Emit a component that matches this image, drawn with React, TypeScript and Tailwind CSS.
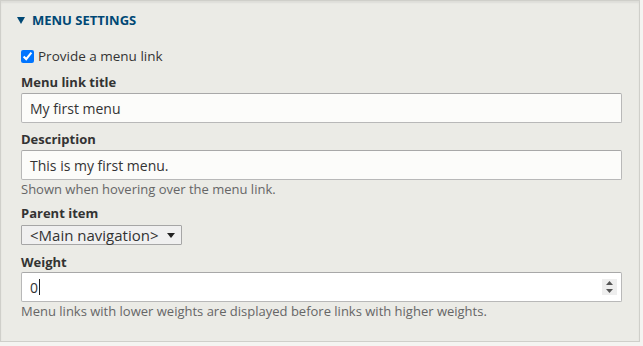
import React from "react";

const font = { fontFamily: '"Open Sans", "Noto Sans", sans-serif' };

export default function App() {
  return (
    <div className="w-[643px] h-[346px] bg-[#f4f4f1] text-[#333]" style={font}>
      <div className="h-[342px] border border-[#cfcfca] bg-[#ebebe6] shadow-[inset_0_2px_2px_rgba(0,0,0,0.06)] mr-[3px]">
        <div className="flex items-center gap-[7px] pl-[16px] pt-[11px] leading-[16px] text-[#004875] font-bold text-[13px] uppercase">
          <svg width="8" height="7" viewBox="0 0 8 7" className="mt-[1px]">
            <polygon points="0,0 8,0 4,7" fill="#004875" />
          </svg>
          <span>Menu settings</span>
        </div>
        <div className="pl-[20px] pr-[17px]">
          <label className="mt-[20px] flex items-center gap-[4px] text-[13.5px] h-[16px]">
            <input type="checkbox" defaultChecked className="w-[13px] h-[13px] m-0" />
            <span>Provide a menu link</span>
          </label>
          <div className="mt-[10px] text-[13px] font-bold leading-[16px]">Menu link title</div>
          <div className="mt-[3px] h-[30px] border border-[#b8b8b8] border-t-[#a8a8a8] bg-[#fcfcfa] rounded-[2px] flex items-center px-[8px] text-[14px]">
            My first menu
          </div>
          <div className="mt-[8px] text-[13px] font-bold leading-[16px]">Description</div>
          <div className="mt-[3px] h-[30px] border border-[#b8b8b8] border-t-[#a8a8a8] bg-[#fcfcfa] rounded-[2px] flex items-center px-[8px] text-[14px]">
            This is my first menu.
          </div>
          <div className="mt-[1px] text-[13px] text-[#666] leading-[16px]">Shown when hovering over the menu link.</div>
          <div className="mt-[8px] text-[13px] font-bold leading-[16px]">Parent item</div>
          <div className="mt-[4px] w-[161px] h-[20px] border border-[#a6a6a6] bg-[#f0f0f0] rounded-[1px] flex items-center justify-between pl-[8px] pr-[6px] text-[15px]">
            <span>&lt;Main navigation&gt;</span>
            <svg width="8" height="5" viewBox="0 0 8 5">
              <polygon points="0,0 8,0 4,5" fill="#222" />
            </svg>
          </div>
          <div className="mt-[9px] text-[13px] font-bold leading-[16px]">Weight</div>
          <div className="relative mt-[2px] h-[30px] border border-[#b8b8b8] border-t-[#a8a8a8] bg-white rounded-[2px] flex items-center px-[8px] text-[14px]">
            <span>0</span>
            <span className="inline-block w-[1px] h-[16px] bg-[#222] ml-[1px]" />
            <div className="absolute right-[4px] top-[6px] w-[15px] h-[16px] bg-[#eee] flex flex-col items-center justify-center gap-[4px]">
              <svg width="7" height="4" viewBox="0 0 7 4"><polygon points="3.5,0 7,4 0,4" fill="#555" /></svg>
              <svg width="7" height="4" viewBox="0 0 7 4"><polygon points="0,0 7,0 3.5,4" fill="#555" /></svg>
            </div>
          </div>
          <div className="mt-[1px] text-[13px] text-[#666] leading-[16px]">Menu links with lower weights are displayed before links with higher weights.</div>
        </div>
      </div>
    </div>
  );
}
